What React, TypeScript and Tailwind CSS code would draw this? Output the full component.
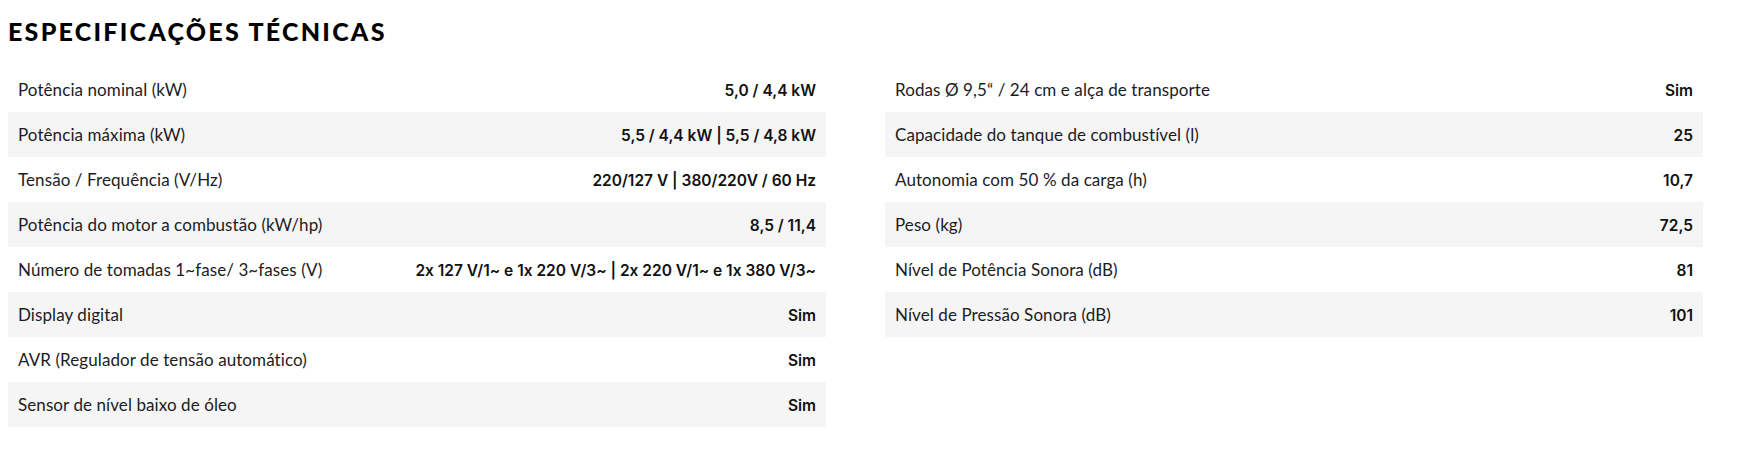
const LEFT: [string, string][] = [
	["Potência nominal (kW)", "5,0 / 4,4 kW"],
	["Potência máxima (kW)", "5,5 / 4,4 kW | 5,5 / 4,8 kW"],
	["Tensão / Frequência (V/Hz)", "220/127 V | 380/220V / 60 Hz"],
	["Potência do motor a combustão (kW/hp)", "8,5 / 11,4"],
	["Número de tomadas 1~fase/ 3~fases (V)", "2x 127 V/1~ e 1x 220 V/3~ | 2x 220 V/1~ e 1x 380 V/3~"],
	["Display digital", "Sim"],
	["AVR (Regulador de tensão automático)", "Sim"],
	["Sensor de nível baixo de óleo", "Sim"],
];

const RIGHT: [string, string][] = [
	["Rodas Ø 9,5“ / 24 cm e alça de transporte", "Sim"],
	["Capacidade do tanque de combustível (l)", "25"],
	["Autonomia com 50 % da carga (h)", "10,7"],
	["Peso (kg)", "72,5"],
	["Nível de Potência Sonora (dB)", "81"],
	["Nível de Pressão Sonora (dB)", "101"],
];

const SpecTable = ({ rows }: { rows: [string, string][] }) => {
	return (
		<div className="flex flex-col">
			{rows.map(([label, value], i) => (
				<div
					key={label}
					className={`flex items-center h-[45px] pl-[10px] pr-[10px] ${
						i % 2 === 1 ? "bg-[#f5f5f5]" : "bg-white"
					}`}
				>
					<div className="flex w-full items-baseline justify-between">
						{/* rótulo */}
						<span className="text-[17px] tracking-[0.005em] text-[#1c1c24] font-['Lato',sans-serif]">
							{label}
						</span>
						{/* valor */}
						<span className="text-[15.5px] font-semibold text-[#111] font-['Inter',sans-serif] whitespace-nowrap [font-feature-settings:'calt'_0]">
							{value}
						</span>
					</div>
				</div>
			))}
		</div>
	);
};

export default function App() {
	return (
		<section className="w-[1738px] h-[465px] bg-white px-[8px] pt-[14px]">
			<h2 className="text-[25px] leading-[34px] font-black tracking-[0.09em] text-black font-['Lato',sans-serif]">
				ESPECIFICAÇÕES TÉCNICAS
			</h2>
			<div className="grid grid-cols-[818px_818px] gap-x-[59px] mt-[19px]">
				<SpecTable rows={LEFT} />
				<div>
					<SpecTable rows={RIGHT} />
				</div>
			</div>
		</section>
	);
}
